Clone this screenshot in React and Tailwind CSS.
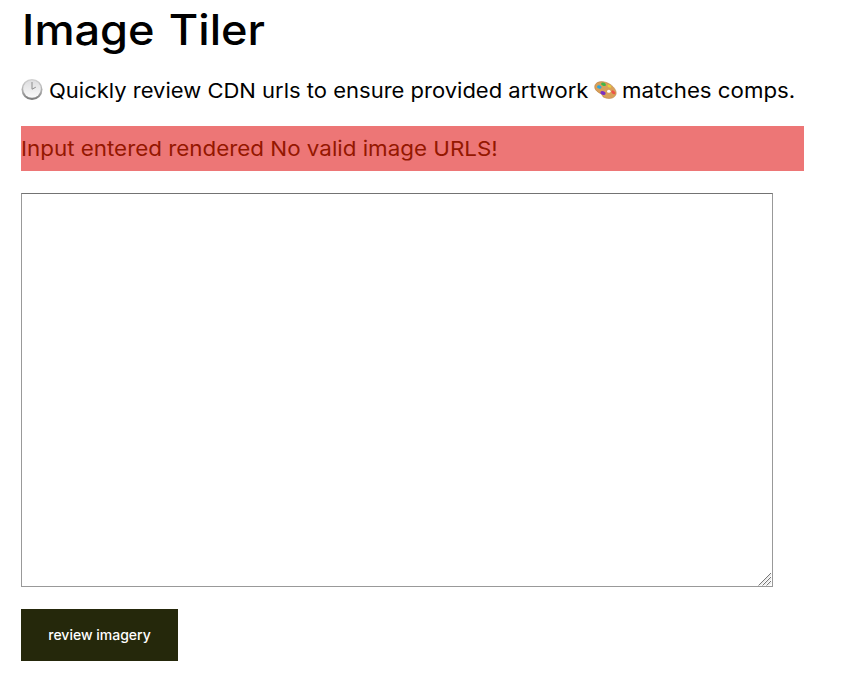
function ClockIcon() {
  return (
    <svg viewBox="0 0 22 22" className="h-[22px] w-[22px] shrink-0" aria-hidden="true">
      <defs>
        <linearGradient id="rim" x1="0" y1="0" x2="0" y2="1">
          <stop offset="0" stopColor="#d2d2d2" />
          <stop offset="0.6" stopColor="#aaaaaa" />
          <stop offset="1" stopColor="#777777" />
        </linearGradient>
        <linearGradient id="face" x1="0" y1="0" x2="0" y2="1">
          <stop offset="0" stopColor="#dddddf" />
          <stop offset="1" stopColor="#fafafa" />
        </linearGradient>
      </defs>
      <circle cx="11" cy="10.500" r="10.500" fill="url(#rim)" />
      <circle cx="11" cy="10" r="8.800" fill="url(#face)" />
      <path d="M11 3V10.200L14.800 8.200" fill="none" stroke="#8c8c8c" strokeWidth="1" />
    </svg>
  );
}

function PaletteIcon() {
  return (
    <svg viewBox="0 0 23 18" className="h-[18px] w-[23px] shrink-0" aria-hidden="true">
      <path
        d="M1 4C3-.2 10-.5 16 3.200c5 3.200 7.600 8 5.400 11.400-2 3.200-7 3.700-11.400 1.800-1.900-.8-1.300-2.100-2.600-3.200C5.400 11.600-.8 9.500 1 4Z"
        fill="#d9a05a"
        stroke="#b57a3c"
        strokeWidth=".5"
      />
      <ellipse cx="14.800" cy="10.300" rx="1.800" ry="1.500" fill="#fff" />
      <ellipse cx="5.300" cy="6" rx="2.300" ry="1.700" transform="rotate(20 5.300 6)" fill="#2ba7df" />
      <ellipse cx="9.500" cy="3.300" rx="2.500" ry="1.600" transform="rotate(20 9.500 3.300)" fill="#3db84a" />
      <ellipse cx="15.300" cy="5.200" rx="2" ry="1.300" transform="rotate(30 15.300 5.200)" fill="#e8cf3b" />
      <ellipse cx="9" cy="12" rx="2.700" ry="1.900" transform="rotate(15 9 12)" fill="#7a2fc4" />
      <ellipse cx="19.300" cy="11.300" rx="2.300" ry="1.500" transform="rotate(40 19.300 11.300)" fill="#ee5348" />
    </svg>
  );
}

export default function App() {
  return (
    <main className="flex h-[685px] w-[843px] flex-col items-start overflow-hidden bg-white pl-[21px] font-['Inter','Liberation_Sans',sans-serif] text-black">
      <h1 className="h-[60px] origin-left scale-x-[1.075] pl-[1px] text-[42px] leading-[60px] font-medium whitespace-nowrap">
        Image <span className="ml-[2px]">Tiler</span>
      </h1>
      <p className="mt-[16px] flex h-[28px] items-center text-[20.500px] whitespace-nowrap">
        <ClockIcon />
        <span className="ml-[6px] w-[545px] pt-[2px]">
          <span className="inline-block origin-left scale-x-[1.073]">Quickly review CDN urls to ensure provided artwork</span>
        </span>
        <PaletteIcon />
        <span className="ml-[5px] pt-[2px]">
          <span className="inline-block origin-left scale-x-[1.085]">matches comps.</span>
        </span>
      </p>
      <div role="alert" className="mt-[22px] flex h-[45px] w-[783px] items-center bg-[#ed7676] pt-[2px] text-[20.500px] whitespace-nowrap text-[#941700]">
        <span className="origin-left scale-x-[1.091]">Input entered rendered No valid image URLS!</span>
      </div>
      <div className="relative mt-[22px] h-[394px] w-[752px]">
        <textarea
          aria-label="Image URLs"
          className="block h-full w-full resize-none rounded-none border border-[#999] border-t-[#737373] bg-white outline-none"
        />
        <svg viewBox="0 0 14 14" className="pointer-events-none absolute right-[1px] bottom-[1px] h-[14px] w-[14px]" aria-hidden="true">
          <path d="M0.500 13.500L13 1M4.500 13.500L13 5M8.500 13.500L13 9" stroke="#777" strokeWidth="1" fill="none" />
          <path d="M2 13.500L13 2.500M6 13.500L13 6.500M10 13.500L13 10.500" stroke="#ccc" strokeWidth=".8" fill="none" />
        </svg>
      </div>
      <button className="mt-[22px] h-[52px] w-[157px] bg-[#25280b] pb-[2px] text-[14px] font-medium text-white">review imagery</button>
    </main>
  );
}
